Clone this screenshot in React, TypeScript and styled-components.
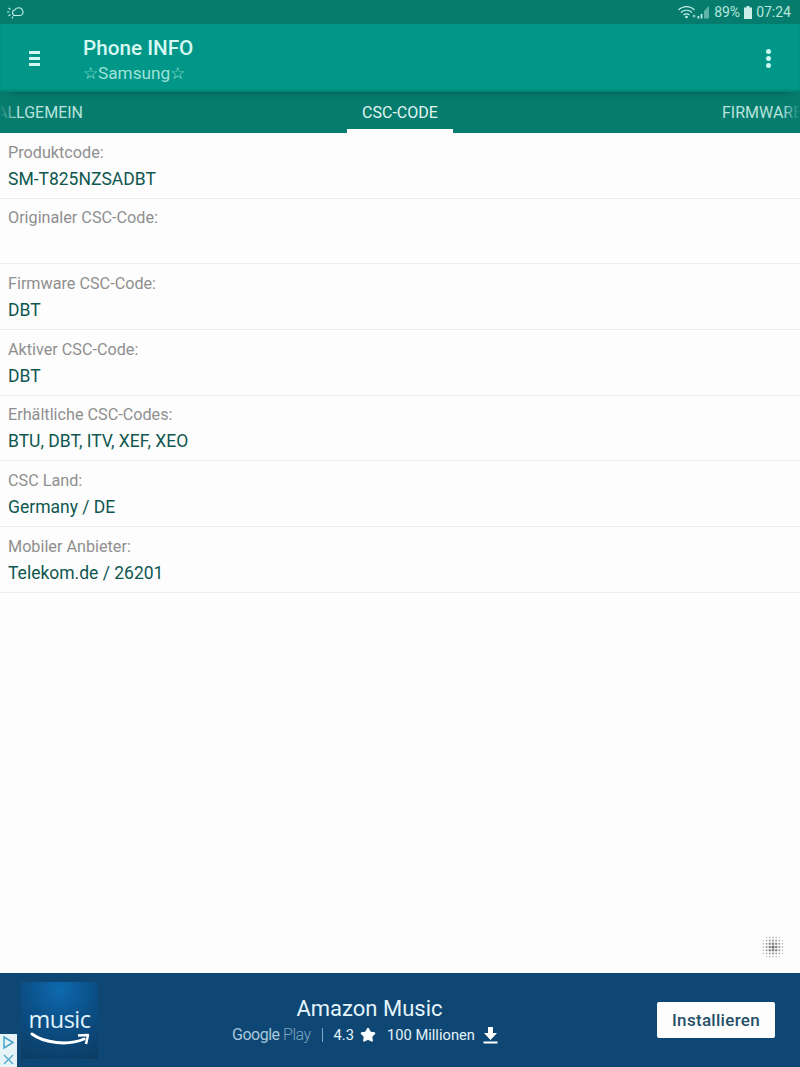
import React from 'react';
import styled, { createGlobalStyle } from 'styled-components';
import { Star } from 'lucide-react';

const GlobalStyle = createGlobalStyle`
  html, body {
    margin: 0;
    padding: 0;
    background: #fdfdfd;
    font-family: Roboto, "Liberation Sans", sans-serif;
  }
`;

const Page = styled.div`
  position: relative;
  width: 800px;
  height: 1067px;
  display: flex;
  flex-direction: column;
  overflow: hidden;
  background: #fdfdfd;
`;

const StatusBar = styled.div`
  height: 24px;
  flex: none;
  display: flex;
  align-items: center;
  justify-content: space-between;
  padding: 0 9px 0 6px;
  background: #067c6e;
  color: #b5e6dc;
  font-size: 14px;
`;

const StatusRight = styled.div`
  display: flex;
  align-items: center;
  gap: 4px;
`;

const Toolbar = styled.header`
  height: 68px;
  flex: none;
  display: flex;
  align-items: center;
  background: #009788;
  box-shadow: inset 0 -2px 2px rgba(0, 80, 70, 0.25);
`;

const MenuButton = styled.div`
  width: 83px;
  flex: none;
  display: flex;
  flex-direction: column;
  gap: 3px;
  padding: 0 0 0 29px;
  box-sizing: border-box;
`;

const MenuLine = styled.span`
  display: block;
  width: 11px;
  height: 3px;
  background: #d2f7f0;
`;

const TitleBlock = styled.div`
  flex: 1;
  display: flex;
  flex-direction: column;
  gap: 2px;
  padding-top: 2px;
`;

const Title = styled.div`
  color: #d6f8f2;
  font-size: 20.7px;
  font-weight: 500;
  line-height: 26px;
`;

const Subtitle = styled.div`
  color: #9fe3d8;
  font-size: 17.2px;
  line-height: 21px;
`;

const MoreButton = styled.div`
  display: flex;
  flex-direction: column;
  gap: 2px;
  padding: 0 29px 0 0;
`;

const MoreDot = styled.span`
  width: 5px;
  height: 5px;
  border-radius: 50%;
  background: #c8f7f0;
`;

const Tabs = styled.nav`
  position: relative;
  height: 41px;
  flex: none;
  display: flex;
  justify-content: center;
  background: #067c6e;
  box-shadow: inset 0 5px 4px -3px rgba(0, 50, 45, 0.35);
`;

const Tab = styled.div<{ $active?: boolean }>`
  position: relative;
  width: 106px;
  flex: none;
  display: flex;
  align-items: center;
  justify-content: center;
  padding-top: 3px;
  box-sizing: border-box;
  color: ${p => (p.$active ? '#e2f6f2' : '#b8e4dc')};
  font-size: 16px;
  white-space: nowrap;
  border-bottom: 4px solid ${p => (p.$active ? '#ffffff' : 'transparent')};
`;

const SideTab = styled(Tab)<{ $side: 'left' | 'right' }>`
  position: absolute;
  top: 0;
  bottom: 0;
  justify-content: flex-start;
  ${p => (p.$side === 'left' ? 'left: 0; margin-left: -3px;' : 'left: 722px;')}
`;

const EdgeFade = styled.div<{ $side: 'left' | 'right' }>`
  position: absolute;
  top: 0;
  bottom: 0;
  width: 18px;
  ${p =>
    p.$side === 'left'
      ? 'left: 0; background: linear-gradient(to right, #067c6e, rgba(6,124,110,0));'
      : 'right: 0; background: linear-gradient(to left, #067c6e, rgba(6,124,110,0));'}
`;

const List = styled.main`
  flex: 1;
  background: #fdfdfd;
`;

const Row = styled.div`
  height: 65.7px;
  box-sizing: border-box;
  padding: 9.6px 8px 0;
  border-bottom: 1px solid #ececec;
`;

const Label = styled.div`
  color: #8f8f8f;
  font-size: 16.2px;
  line-height: 20px;
`;

const Value = styled.div`
  margin-top: 6px;
  color: #0f5750;
  font-size: 17.5px;
  line-height: 21px;
`;

const GridHandle = styled.svg`
  position: absolute;
  right: 16px;
  top: 936px;
`;

const AdBar = styled.aside`
  position: relative;
  height: 94px;
  flex: none;
  display: flex;
  align-items: center;
  padding: 0 25px 0 21px;
  background: #0e4773;
`;

const AppIcon = styled.div`
  width: 77px;
  height: 77px;
  flex: none;
  display: flex;
  flex-direction: column;
  align-items: center;
  box-sizing: border-box;
  padding-top: 24px;
  background: radial-gradient(circle at 50% 10%, #0e6ab0 0%, #0b4f86 45%, #0c3c62 100%);
`;

const AppIconWord = styled.div`
  color: #e2f3fa;
  font-family: "Open Sans", sans-serif;
  font-size: 23.5px;
  line-height: 26px;
  letter-spacing: -0.5px;
`;

const AdBody = styled.div`
  flex: 1;
  display: flex;
  flex-direction: column;
  align-items: center;
  padding-right: 16px;
`;

const AdTitle = styled.div`
  color: #e4f4fb;
  font-size: 22px;
  line-height: 26px;
`;

const AdMeta = styled.div`
  display: flex;
  align-items: center;
  margin-top: 4px;
  padding-right: 9px;
  color: #e4f4fb;
  font-size: 14.7px;
  line-height: 18px;
`;

const StoreName = styled.span`
  color: #a9c8dc;
  font-size: 16px;
  letter-spacing: -0.5px;
`;

const StoreLight = styled.span`
  color: #7fa6c2;
  font-weight: 300;
`;

const Divider = styled.span`
  width: 1px;
  height: 14px;
  margin: 0 11px;
  background: #7fa6c2;
`;

const RatingStar = styled(Star)`
  margin: 0 11px 0 6px;
`;

const DownloadIcon = styled.svg`
  margin-left: 8px;
`;

const InstallButton = styled.div`
  width: 118px;
  height: 36px;
  flex: none;
  display: flex;
  align-items: center;
  justify-content: center;
  border-radius: 2px;
  background: #fdfdfd;
  color: #264f68;
  font-size: 17px;
  font-weight: 500;
  letter-spacing: 0.3px;
`;

const AdChoices = styled.div`
  position: absolute;
  left: 0;
  bottom: 0;
  width: 17px;
  height: 33px;
  display: flex;
  flex-direction: column;
  align-items: center;
  justify-content: space-around;
  background: #e6f4f8;
`;

const rows = [
  { label: 'Produktcode:', value: 'SM-T825NZSADBT' },
  { label: 'Originaler CSC-Code:', value: '\u00a0' },
  { label: 'Firmware CSC-Code:', value: 'DBT' },
  { label: 'Aktiver CSC-Code:', value: 'DBT' },
  { label: 'Erhältliche CSC-Codes:', value: 'BTU, DBT, ITV, XEF, XEO' },
  { label: 'CSC Land:', value: 'Germany / DE' },
  { label: 'Mobiler Anbieter:', value: 'Telekom.de / 26201' },
];

// dot matrix of the floating handle, bigger towards the middle
const handleDots: { x: number; y: number; r: number; o: number }[] = [];
for (let i = 0; i < 7; i++) {
  for (let j = 0; j < 7; j++) {
    const d = Math.hypot(i - 3, j - 3);
    if (d < 3.7) {
      handleDots.push({
        x: 1.4 + i * 3.2,
        y: 1.4 + j * 3.2,
        r: Math.max(0.7, 1.6 - d * 0.26),
        o: Math.max(0.45, 1 - d * 0.16),
      });
    }
  }
}

const App: React.FC = () => (
  <Page>
    <GlobalStyle />
    <StatusBar>
      <svg width="18" height="14" viewBox="0 0 18 14" fill="none" stroke="#c6efe7" strokeWidth="1.1">
        <path d="M9 10.500C6 10.500 5.500 5.500 8.800 5C10 2 15.500 2 16.500 5.500C18 8 16 10.500 14 10.500z" />
        <path d="M1 7h2.500M2.500 3l2 1.500M2.500 11l2-1.500M6 13.500l1-2" />
      </svg>
      <StatusRight>
        <svg width="32" height="14" viewBox="0 0 32 14" fill="none">
          <path d="M0.500 5C5 0.500 12 0.500 16.500 5M3 7.500C6 4.500 11 4.500 14 7.500M5.500 10C7 8.500 10 8.500 11.500 10" stroke="#c6efe7" strokeWidth="1.200" />
          <circle cx="8.500" cy="12" r="1.300" fill="#c6efe7" />
          <path d="M14.500 11h3M16 9.500v3" stroke="#b5e6dc" strokeWidth="0.900" />
          <path d="M19.500 13.500h1.700v-2.500h-1.700zM22.700 13.500h1.700V9h-1.700z" fill="#c6efe7" />
          <path d="M26 13.500h5V1l-5 5z" fill="#5fb3a6" />
        </svg>
        <span>89%</span>
        <svg width="8" height="13" viewBox="0 0 8 13">
          <path d="M2.500 0h3v1.500H8V13H0V1.500h2.500z" fill="#c9eee7" />
        </svg>
        <span>07:24</span>
      </StatusRight>
    </StatusBar>
    <Toolbar>
      <MenuButton>
        <MenuLine />
        <MenuLine />
        <MenuLine />
      </MenuButton>
      <TitleBlock>
        <Title>Phone INFO</Title>
        <Subtitle>☆Samsung☆</Subtitle>
      </TitleBlock>
      <MoreButton>
        <MoreDot />
        <MoreDot />
        <MoreDot />
      </MoreButton>
    </Toolbar>
    <Tabs>
      <SideTab $side="left">ALLGEMEIN</SideTab>
      <Tab $active>CSC-CODE</Tab>
      <SideTab $side="right">FIRMWARE</SideTab>
      <EdgeFade $side="left" />
      <EdgeFade $side="right" />
    </Tabs>
    <List>
      {rows.map(row => (
        <Row key={row.label}>
          <Label>{row.label}</Label>
          <Value>{row.value}</Value>
        </Row>
      ))}
    </List>
    <GridHandle width="22" height="22" viewBox="0 0 22 22">
      {handleDots.map(dot => (
        <circle key={`${dot.x}-${dot.y}`} cx={dot.x} cy={dot.y} r={dot.r} fill="#6f6f6f" opacity={dot.o} />
      ))}
    </GridHandle>
    <AdBar>
      <AppIcon>
        <AppIconWord>music</AppIconWord>
        <svg width="64" height="18" viewBox="0 0 64 18" fill="none">
          <path d="M4 2C16 11 40 14 56 7" stroke="#ffffff" strokeWidth="3" strokeLinecap="round" />
          <path d="M50 3.500L60 3l-2 9" stroke="#ffffff" strokeWidth="2.500" strokeLinejoin="round" />
        </svg>
      </AppIcon>
      <AdBody>
        <AdTitle>Amazon Music</AdTitle>
        <AdMeta>
          <StoreName>
            Google <StoreLight>Play</StoreLight>
          </StoreName>
          <Divider />
          <span>4.3</span>
          <RatingStar size={16} fill="#ffffff" color="#ffffff" />
          <span>100 Millionen</span>
          <DownloadIcon width="15" height="17" viewBox="0 0 15 17">
            <path d="M5 0h5v6h4l-6.500 7L1 6h4z" fill="#ffffff" />
            <path d="M0.500 14.500h14V16.500H0.500z" fill="#ffffff" />
          </DownloadIcon>
        </AdMeta>
      </AdBody>
      <InstallButton>Installieren</InstallButton>
      <AdChoices>
        <svg width="13" height="13" viewBox="0 0 13 13" fill="none">
          <path d="M2 1l9 5.500-9 5.500z" stroke="#4aa5c8" strokeWidth="1.500" />
        </svg>
        <svg width="11" height="11" viewBox="0 0 11 11" fill="none">
          <path d="M1 1l9 9M10 1l-9 9" stroke="#4aa5c8" strokeWidth="1.200" />
        </svg>
      </AdChoices>
    </AdBar>
  </Page>
);

export default App;
